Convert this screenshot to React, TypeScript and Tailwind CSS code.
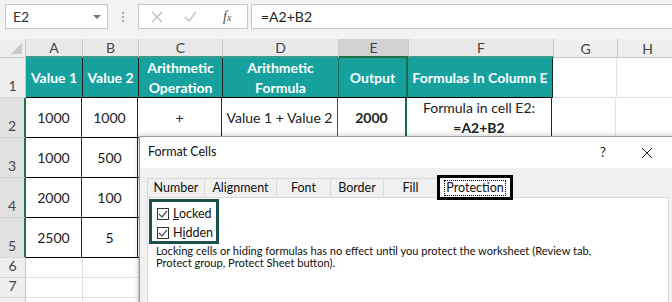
import React from "react";

const cols = [
  { k: "A", w: 57 },
  { k: "B", w: 56 },
  { k: "C", w: 84 },
  { k: "D", w: 116 },
  { k: "E", w: 70 },
  { k: "F", w: 145 },
  { k: "G", w: 64 },
  { k: "H", w: 60 },
];

const hdr = [
  ["Value 1"],
  ["Value 2"],
  ["Arithmetic", "Operation"],
  ["Arithmetic", "Formula"],
  ["Output"],
  ["Formulas In Column E"],
];

const data: string[][] = [
  ["1000", "1000", "+", "Value 1 + Value 2", "2000", "F"],
  ["1000", "500", "", "", "", ""],
  ["2000", "100", "", "", "", ""],
  ["2500", "5", "", "", "", ""],
];

function RowHead({ n, h, sel }: { n?: number; h: number; sel?: boolean }) {
  return (
    <div
      className={`w-[26px] shrink-0 flex items-end justify-center pb-[1px] border-b border-[#d4d4d4] text-[14px] text-[#444] ${
        sel ? "bg-[#e1e1e1] border-r-2 border-r-[#217346]" : "bg-[#efefef] border-r border-r-[#c8c8c8]"
      }`}
      style={{ height: h }}
    >
      {n}
    </div>
  );
}

export default function App() {
  return (
    <div className="w-[672px] h-[302px] relative overflow-hidden bg-white font-['Lato',sans-serif]">
      {/* formula bar */}
      <div className="h-[39px] bg-[#f3f3f3] flex items-start pt-[4px]">
        <div className="ml-[5px] w-[103px] h-[25px] bg-white border border-[#c6c6c6] flex items-center pl-[7px] pr-[6px] text-[14px] text-[#333]">
          <span className="flex-1">E2</span>
          <span className="w-0 h-0 border-l-[4px] border-r-[4px] border-t-[4px] border-l-transparent border-r-transparent border-t-[#777]" />
        </div>
        <div className="w-[30px] h-[25px] flex flex-col items-center justify-center gap-[2px]">
          <span className="w-[2px] h-[2px] bg-[#aaa]" />
          <span className="w-[2px] h-[2px] bg-[#aaa]" />
          <span className="w-[2px] h-[2px] bg-[#aaa]" />
        </div>
        <div className="w-[110px] h-[25px] bg-white border border-[#c6c6c6] flex items-center">
          <svg width="12" height="12" viewBox="0 0 12 12" className="ml-[12px]">
            <path d="M1 1L11 11M11 1L1 11" stroke="#bbb" strokeWidth="1.3" />
          </svg>
          <svg width="13" height="11" viewBox="0 0 13 11" className="ml-[21px]">
            <path d="M1 6L5 10L12 1" stroke="#c4c4c4" strokeWidth="1.5" fill="none" />
          </svg>
          <span className="ml-[26px] text-[14px] italic text-[#555] font-['Liberation_Serif',serif]">
            f<span className="text-[10px]">x</span>
          </span>
        </div>
        <div className="ml-[3px] flex-1 h-[25px] bg-white border border-[#c6c6c6] border-r-0 flex items-center pl-[9px] text-[14px] text-[#222]">
          =A2+B2
        </div>
      </div>

      {/* column headers */}
      <div className="flex h-[19px]">
        <div className="w-[26px] shrink-0 bg-[#efefef] border-r border-b border-[#c8c8c8] relative">
          <span
            className="absolute right-[3px] bottom-[3px] w-0 h-0"
            style={{ borderBottom: "11px solid #c9c9c9", borderLeft: "11px solid transparent" }}
          />
        </div>
        {cols.map((c, i) => (
          <div
            key={c.k}
            className={`shrink-0 flex items-center justify-center text-[14px] text-[#444] border-r border-[#c8c8c8] ${
              c.k === "E"
                ? "bg-[#d2d2d2] border-b-2 border-b-[#217346]"
                : i < 6
                ? "bg-[#e9e9e9] border-b-2 border-b-[#3a9a8c]"
                : "bg-[#efefef] border-b border-b-[#c8c8c8]"
            }`}
            style={{ width: c.w }}
          >
            {c.k}
          </div>
        ))}
      </div>

      {/* row 1 */}
      <div className="flex h-[40px]">
        <RowHead n={1} h={40} />
        {cols.map((c, i) => {
          if (i >= 6)
            return <div key={c.k} className="shrink-0 border-r border-b border-[#e1e1e1] bg-white" style={{ width: c.w }} />;
          return (
            <div
              key={c.k}
              className={`shrink-0 bg-[#16a19e] text-white font-bold text-[14px] leading-[20px] flex flex-col items-center justify-center border-b border-b-black ${
                i === 4 ? "border-r-2 border-r-[#1b6b52] border-l border-l-[#1b6b52]" : "border-r border-r-[#222]"
              }`}
              style={{ width: c.w, marginLeft: i === 4 ? -1 : 0 }}
            >
              {hdr[i].map((t) => (
                <span key={t} className="whitespace-nowrap">
                  {t}
                </span>
              ))}
            </div>
          );
        })}
      </div>

      {/* rows 2-5 */}
      {data.map((r, ri) => (
        <div key={ri} className="flex h-[40px]">
          <RowHead n={ri + 2} h={40} sel />
          {cols.map((c, i) => {
            if (i >= 6)
              return <div key={c.k} className="shrink-0 border-r border-b border-[#e1e1e1] bg-white" style={{ width: c.w }} />;
            return (
              <div
                key={c.k}
                className={`shrink-0 bg-white text-[#222] text-[14px] leading-[20px] flex flex-col items-center justify-center border-b border-b-black ${
                  i === 4 ? "border-r-2 border-r-[#1b6b52] border-l border-l-[#1b6b52] font-bold" : "border-r border-r-[#222]"
                }`}
                style={{ width: i === 0 ? c.w - 1 : c.w, marginLeft: i === 4 ? -1 : 0 }}
              >
                {i === 5 && ri === 0 ? (
                  <>
                    <span className="whitespace-nowrap">Formula in cell E2:</span>
                    <span className="font-bold">=A2+B2</span>
                  </>
                ) : i === 5 ? null : r[i] ? (
                  <span className="whitespace-nowrap">{r[i]}</span>
                ) : null}
              </div>
            );
          })}
        </div>
      ))}

      {/* rows 6-8 */}
      {[6, 7, 0].map((n) => (
        <div key={n} className="flex h-[20px]">
          <RowHead n={n || undefined} h={20} />
          {cols.map((c) => (
            <div key={c.k} className="shrink-0 border-r border-b border-[#e1e1e1] bg-white" style={{ width: c.w }} />
          ))}
        </div>
      ))}

      {/* Format Cells dialog */}
      <div className="absolute left-[139px] top-[136px] w-[540px] h-[180px] border border-[#9a9a9a] bg-[#f0f0f0] font-['Lato',sans-serif] text-[#111] shadow-[0_0_6px_rgba(0,0,0,0.25)]">
        <div className="h-[31px] bg-white flex items-center pl-[8px] text-[12.5px]">
          <span className="flex-1">Format Cells</span>
          <span className="w-[20px] text-center text-[13px] mr-[28px]">?</span>
          <svg width="12" height="12" viewBox="0 0 12 12" className="mr-[25px]">
            <path d="M1 1L11 11M11 1L1 11" stroke="#222" strokeWidth="1" />
          </svg>
        </div>
        <div className="pl-[7px] pr-[9px] pt-[9px]">
          <div className="flex items-end h-[20px] text-[12.5px] relative z-10">
            {[
              ["Number", 57],
              ["Alignment", 72],
              ["Font", 54],
              ["Border", 53],
              ["Fill", 54],
            ].map(([t, w]) => (
              <div
                key={t as string}
                className="h-[19px] flex items-center justify-center border-t border-l border-[#d9d9d9] bg-[#f0f0f0]"
                style={{ width: w as number }}
              >
                {t}
              </div>
            ))}
            <div className="w-[76px] h-[25px] mb-[-3px] bg-white border-[3px] border-black flex items-center justify-center">
              <span className="border border-dotted border-black px-[1px] leading-[14px]">Protection</span>
            </div>
          </div>
          <div className="bg-white border border-[#d9d9d9] h-[120px] relative">
            <div className="ml-[1px] mt-[1px] w-[70px] h-[45px] border-[3px] border-[#1d4f4f] flex flex-col pl-[5px] pt-[6px] gap-[7px] text-[12.5px]">
              {[0, 1].map((idx) => (
                <div key={idx} className="flex items-center gap-[4px] h-[12px]">
                  <span className="w-[12px] h-[12px] border border-[#333] bg-white flex items-center justify-center">
                    <svg width="10" height="8" viewBox="0 0 10 8">
                      <path d="M1 4L4 7L9 1" stroke="#555" strokeWidth="1.2" fill="none" />
                    </svg>
                  </span>
                  {idx === 0 ? (
                    <span>
                      <u>L</u>ocked
                    </span>
                  ) : (
                    <span>
                      H<u>i</u>dden
                    </span>
                  )}
                </div>
              ))}
            </div>
            <div className="pl-[8px] pt-[1px] text-[11.1px] leading-[12px] text-[#111]">
              <div className="h-[12px]">Locking cells or hiding formulas has no effect until you protect the worksheet (Review tab,</div>
              <div className="h-[12px]">Protect group, Protect Sheet button).</div>
            </div>
          </div>
        </div>
      </div>
    </div>
  );
}
